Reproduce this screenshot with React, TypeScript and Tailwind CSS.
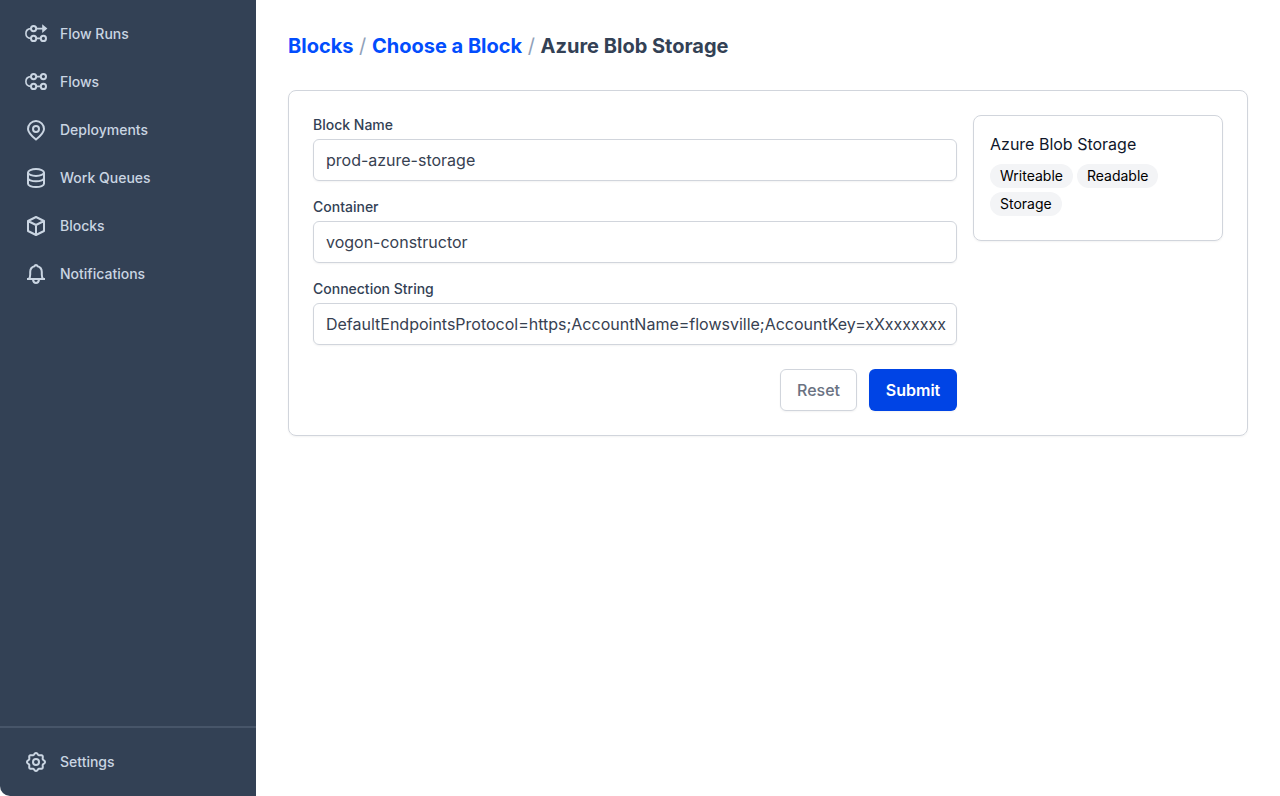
import type { ReactNode } from 'react';

function Icon({ children }: { children: ReactNode }) {
  return (
    <svg className="size-6 shrink-0" viewBox="0 0 24 24" fill="none" stroke="currentColor" strokeWidth="2" strokeLinejoin="round">
      {children}
    </svg>
  );
}

const flowRuns = (
  <Icon>
    <circle cx="9.6" cy="6.6" r="2.6" />
    <circle cx="9.6" cy="16.4" r="2.6" />
    <circle cx="19.4" cy="16.4" r="2.6" />
    <path d="M12.200 6.600h7M12.200 16.400h4.600M7 6.600C3.600 6.800 1.900 9 1.900 11.500s1.700 4.700 5.100 4.900" strokeWidth="1.6" />
    <path d="M18.200 2.200v8.800l5.200-4.400z" fill="currentColor" stroke="none" />
  </Icon>
);

const flows = (
  <Icon>
    <circle cx="9.6" cy="6.6" r="2.6" />
    <circle cx="19.4" cy="6.6" r="2.6" />
    <circle cx="9.6" cy="16.4" r="2.6" />
    <circle cx="19.4" cy="16.4" r="2.6" />
    <path d="M12.200 6.600h4.600M12.200 16.400h4.600M7 6.600C3.600 6.800 1.900 9 1.900 11.500s1.700 4.700 5.100 4.900" strokeWidth="1.6" />
  </Icon>
);

const pin = (
  <Icon>
    <path d="M20 11c0 3.500-3 6.500-8 10.600C7 17.500 4 14.500 4 11a8 8 0 0 1 16 0z" />
    <circle cx="12" cy="11" r="3" />
  </Icon>
);

const database = (
  <Icon>
    <ellipse cx="12" cy="6.5" rx="8" ry="3.4" />
    <path d="M4 6.500v11.200C4 19.600 7.600 21 12 21s8-1.400 8-3.300V6.500M4 12c0 1.900 3.600 3.300 8 3.300s8-1.400 8-3.300" />
  </Icon>
);

const cube = (
  <Icon>
    <path d="M12 3l8 4v10l-8 4-8-4V7zM4 7l8 4 8-4M12 11v10" />
  </Icon>
);

const bell = (
  <Icon>
    <path d="M3 17h18M4.800 17c1-1 1.400-2.500 1.400-4.500V10c0-3.300 1.800-5.200 4.300-5.800.2-.8.700-1.200 1.500-1.200s1.300.4 1.500 1.200c2.500.6 4.300 2.500 4.300 5.800v2.500c0 2 .4 3.500 1.400 4.500M9 17.500c.3 2.300 1.300 3.500 3 3.500s2.700-1.200 3-3.500" />
  </Icon>
);

const gearOutline = Array.from({ length: 96 }, (_, i) => {
  const angle = (i / 96) * Math.PI * 2;
  const radius = 8.15 + 0.85 * Math.cos(8 * angle);
  return `${(12 + radius * Math.cos(angle)).toFixed(2)},${(12 + radius * Math.sin(angle)).toFixed(2)}`;
}).join(' ');

const gear = (
  <Icon>
    <circle cx="12" cy="12" r="3" />
    <polygon points={gearOutline} />
  </Icon>
);

const navItems = [
  { label: 'Flow Runs', icon: flowRuns },
  { label: 'Flows', icon: flows },
  { label: 'Deployments', icon: pin },
  { label: 'Work Queues', icon: database },
  { label: 'Blocks', icon: cube },
  { label: 'Notifications', icon: bell },
];

function NavItem({ label, icon }: { label: string; icon: ReactNode }) {
  return (
    <a className="flex h-12 items-center gap-3 px-6 text-sm font-medium text-slate-300">
      {icon}
      <span>{label}</span>
    </a>
  );
}

const fields = [
  { label: 'Block Name', value: 'prod-azure-storage' },
  { label: 'Container', value: 'vogon-constructor' },
  { label: 'Connection String', value: 'DefaultEndpointsProtocol=https;AccountName=flowsville;AccountKey=xXxxxxxxx' },
];

export default function App() {
  return (
    <div className="flex h-screen bg-white font-['Inter',sans-serif] text-[#334155]">
      <aside className="flex w-64 shrink-0 flex-col rounded-bl-[10px] bg-[#334155] pt-2.5">
        <nav className="flex-1">
          {navItems.map((item) => (
            <NavItem key={item.label} {...item} />
          ))}
        </nav>
        <div className="border-t-2 border-[#475569] pt-2.5 pb-2.5">
          <NavItem label="Settings" icon={gear} />
        </div>
      </aside>
      <main className="min-w-0 flex-1 px-8 pt-8">
        <h1 className="flex h-7 items-center gap-[5.6px] text-xl font-bold">
          <a className="text-[#024dfd]">Blocks</a>
          <span className="font-normal text-slate-400">/</span>
          <a className="text-[#024dfd]">Choose a Block</a>
          <span className="font-normal text-slate-400">/</span>
          <span>Azure Blob Storage</span>
        </h1>
        <section className="mt-[30px] flex h-[346px] items-start gap-4 rounded-lg border border-gray-300 p-6 shadow-xs">
          <form className="min-w-0 flex-1">
            <div className="flex flex-col gap-4">
              {fields.map((field) => (
                <label key={field.label} className="block">
                  <span className="mb-1 block text-sm font-medium">{field.label}</span>
                  <input
                    className="block h-[42px] w-full rounded-md border border-gray-300 pr-2 pl-3 text-base tracking-[-0.005px] text-[#374151] shadow-xs outline-none"
                    defaultValue={field.value}
                  />
                </label>
              ))}
            </div>
            <div className="mt-6 flex justify-end gap-3">
              <button type="button" className="h-[42px] w-[77px] rounded-md border border-gray-300 font-medium text-gray-500 shadow-xs">
                Reset
              </button>
              <button type="button" className="h-[42px] w-[88px] rounded-md bg-[#0044e5] font-semibold text-white shadow-xs">
                Submit
              </button>
            </div>
          </form>
          <aside className="h-[126px] w-[250px] shrink-0 rounded-lg border border-gray-300 p-4 shadow-xs">
            <p className="text-base text-slate-900">Azure Blob Storage</p>
            <div className="mt-2 flex flex-wrap gap-1">
              {['Writeable', 'Readable', 'Storage'].map((tag) => (
                <span key={tag} className="flex h-6 items-center rounded-full bg-gray-100 px-2.5 text-sm text-black">
                  {tag}
                </span>
              ))}
            </div>
          </aside>
        </section>
      </main>
    </div>
  );
}
